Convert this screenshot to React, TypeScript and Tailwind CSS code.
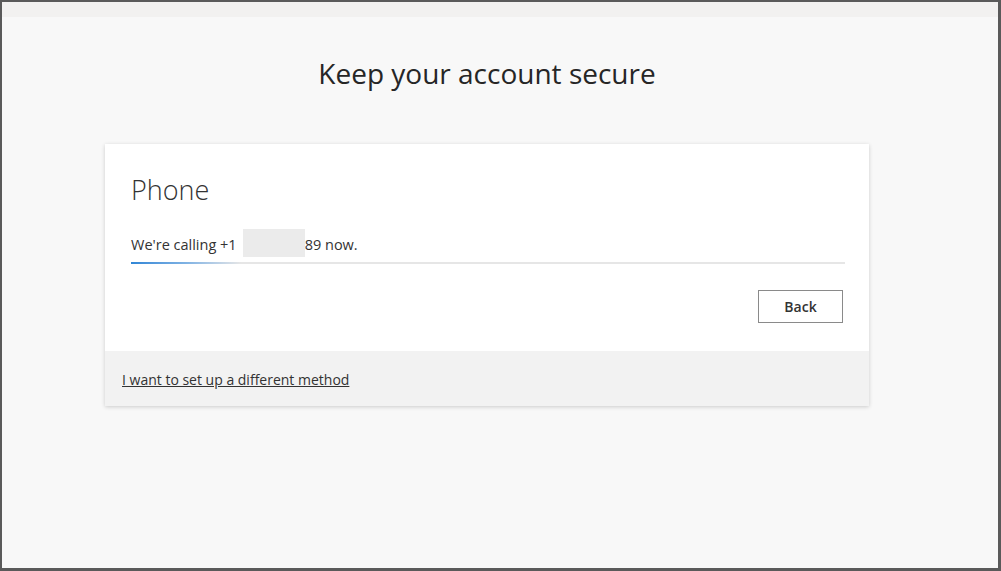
export default function App() {
  return (
    <div className="h-[571px] w-[1001px] overflow-hidden bg-[#5a5a5a] pt-[2px] pl-[2px] pr-[3px] pb-[3px] font-['Open_Sans',sans-serif] text-[#262626]">
      <div className="flex h-full flex-col bg-[#f8f8f8]">
        <div className="h-[15px] bg-[#f2f1f0]" />
        <h1 className="ml-[103px] mt-[39px] w-[764px] text-center text-[28px] leading-[34px] text-[#262626]">
          Keep your account secure
        </h1>
        <div className="ml-[103px] mt-[54px] w-[764px] bg-white shadow-[0_1px_4px_rgba(0,0,0,0.18)]">
          <div className="px-[26px] pt-[28px] pb-[28px]">
            <h2 className="text-[27px] font-light leading-[36px] text-[#333]">Phone</h2>
            <p className="mt-[27px] flex items-center text-[14.5px] leading-[20px] text-[#333]">
              <span>We&apos;re calling +1</span>
              <span className="relative ml-[6px] mr-[2px] inline-block h-[20px] w-[60px]">
                <span className="absolute left-0 top-[-6px] h-[28px] w-[62px] bg-[#ebebeb]" />
              </span>
              <span>89 now.</span>
            </p>
            <div className="mt-[7px] h-[2px] w-[714px] bg-[#e6e6e6]">
              <div className="h-[2px] w-[110px] bg-gradient-to-r from-[#2f86d6] via-[#7fb2e3] to-[#e6e6e6]" />
            </div>
            <div className="mt-[26px] flex justify-end">
              <button className="h-[33px] w-[85px] border border-[#8a8a8a] bg-white text-[14px] font-semibold text-[#333]">
                Back
              </button>
            </div>
          </div>
          <div className="bg-[#f2f2f2] px-[17px] pt-[16px] pb-[15px]">
            <a className="text-[14px] leading-[20px] text-[#333] underline">
              I want to set up a different method
            </a>
          </div>
        </div>
      </div>
    </div>
  );
}
